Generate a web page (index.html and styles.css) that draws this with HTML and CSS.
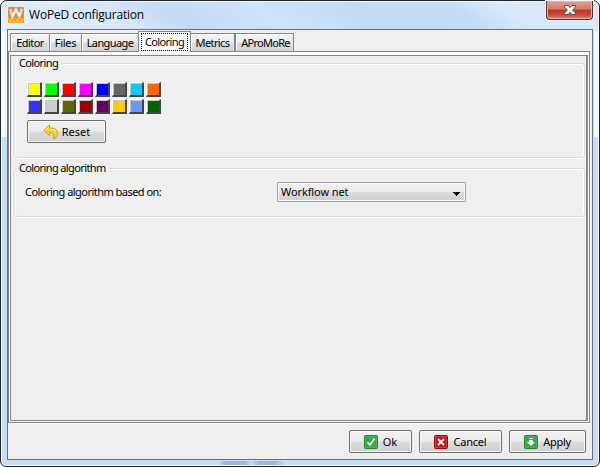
FILE: index.html
```html
<!DOCTYPE html>
<html lang="en">
<head>
<meta charset="utf-8">
<title>WoPeD configuration</title>
<link rel="stylesheet" href="styles.css">
</head>
<body>
<div class="window">
  <header class="titlebar">
    <svg class="logo" width="16" height="16" viewBox="0 0 16 16">
      <rect width="16" height="16" rx="1" fill="#f58242"/>
      <rect y="11" width="16" height="5" fill="#f7a61c"/>
      <path d="M2.200 2l2.300 7.300L8 2.500l3.500 6.800L13.800 2" fill="none" stroke="#fff" stroke-width="2.200"/>
      <path d="M2 14.500l1.500-2M5 14.500h1.500M8 14.500l1.500-2M11 14.500h1M13 14.500l1.500-2" stroke="#fff3c0" fill="none"/>
    </svg>
    <h1>WoPeD configuration</h1>
    <button class="close" aria-label="Close">
      <svg width="12" height="10" viewBox="0 0 12 10"><path d="M.5.5h3.700L6 2.700 7.800.500h3.700v1.500L8.600 5l2.900 3v1.500H7.800L6 7.300 4.200 9.500H.500V8l2.900-3L.500 2z" fill="#fff" stroke="#554e5d"/></svg>
    </button>
  </header>
  <main class="client">
    <nav class="tabs">
      <span class="tab editor"><b>Editor</b></span><span class="tab files"><b>Files</b></span><span class="tab language"><b>Language</b></span><span class="tab selected"><b>Coloring</b></span><span class="tab metrics"><b>Metrics</b></span><span class="tab apromore"><b>AProMoRe</b></span>
    </nav>
    <div class="pane">
      <div class="page">
        <fieldset class="group colors">
          <legend><b>Coloring</b></legend>
          <div class="swatches">
            <i class="yellow"></i><i class="green"></i><i class="red"></i><i class="magenta"></i><i class="blue"></i><i class="gray"></i><i class="cyan"></i><i class="orange"></i>
            <i class="indigo"></i><i class="silver"></i><i class="olive"></i><i class="maroon"></i><i class="purple"></i><i class="gold"></i><i class="sky"></i><i class="forest"></i>
          </div>
          <button class="btn reset">
            <svg width="16" height="16" viewBox="0 0 16 16"><path d="M6.500 1L.8 6.600l5.700 5V8.500c3.200-.2 4.700 1.200 4.200 6.500 3.600-2.400 5-5.200 3.500-8C12.800 4.500 10 3.900 6.500 4z" fill="#f2d32c" stroke="#c6a21b"/><path d="M6 3L2.300 6.500M7 5.400c3-.2 5.500.6 6.200 2.700" fill="none" stroke="#fff19a"/></svg>
            <b>Reset</b>
          </button>
        </fieldset>
        <fieldset class="group algorithm">
          <legend><b>Coloring algorithm</b></legend>
          <div class="row">
            <label><b>Coloring algorithm based on:</b></label>
            <div class="combo"><b>Workflow net</b><svg width="7" height="4" viewBox="0 0 7 4" shape-rendering="crispEdges"><path d="M0 0h7v1H6v1H5v1H4v1H3V3H2V2H1V1H0z"/></svg></div>
          </div>
        </fieldset>
      </div>
    </div>
    <footer class="actions">
      <button class="btn ok">
        <svg width="14" height="14" viewBox="0 0 14 14"><rect x=".5" y=".5" width="13" height="13" rx="1" fill="#35a84a" stroke="#188832"/><rect x="1.500" y="1.500" width="11" height="11" fill="none" stroke="#58b969" stroke-width=".6"/><path d="M3.500 7.200L6 10l4.500-6.500" fill="none" stroke="#fff" stroke-width="1.600"/></svg>
        <b>Ok</b>
      </button>
      <button class="btn cancel">
        <svg width="14" height="14" viewBox="0 0 14 14"><rect x=".5" y=".5" width="13" height="13" rx="1" fill="#cf0c14" stroke="#a50008"/><rect x="1.500" y="1.500" width="11" height="11" fill="none" stroke="#e25b60" stroke-width=".6"/><path d="M4 4l6 6M10 4l-6 6" stroke="#fff" stroke-width="2"/></svg>
        <b>Cancel</b>
      </button>
      <button class="btn apply">
        <svg width="14" height="14" viewBox="0 0 14 14"><rect x=".5" y=".5" width="13" height="13" rx="1" fill="#35a84a" stroke="#188832"/><rect x="1.500" y="1.500" width="11" height="11" fill="none" stroke="#58b969" stroke-width=".6"/><path d="M5 3h4v1H5zM5 5h4v2h2.200L7 11 2.800 7H5z" fill="#fff"/></svg>
        <b>Apply</b>
      </button>
    </footer>
  </main>
</div>
</body>
</html>
```
FILE: styles.css
```css
* { box-sizing: border-box; }
body { margin: 0; background: #fff; color: #000; font: 11px/14px "Noto Sans", sans-serif; overflow: hidden; }
b { font-weight: 400; white-space: nowrap; }
button { font: inherit; color: inherit; margin: 0; padding: 0; }
svg { display: block; flex: none; }

.window {
  width: 600px; height: 467px; padding: 0 5px 5px 6px;
  border: 1px solid #20252d; border-radius: 7px 7px 6px 6px;
  box-shadow: inset 0 0 0 1px #f2f9ff;
  background:
    linear-gradient(90deg, transparent 18px, #9eb8dc 24px, #9eb8dc 44px, transparent 50px, #9eb8dc 58px, #9eb8dc 74px, transparent 84px) 200px 460px / 100px 6px no-repeat,
    linear-gradient(#f0f7fe, #f0f7fe) 0 30px / 6px 106px no-repeat,
    linear-gradient(#f0f7fe, #f0f7fe) 593px 30px / 6px 106px no-repeat,
    linear-gradient(35deg, #e3effc 0, #d9e9fb 20%, #c4dbf4 30%, #cfe4fb 45%, #c2dcf5 60%, #c5def6 76%, #d9eafd 84%, #d5e8fc 100%) 0 0 / 600px 30px no-repeat,
    #c8def6;
}
.titlebar { height: 28px; display: flex; align-items: flex-start; padding-left: 1px; }
.logo { margin-top: 6px; }
h1 { margin: 6px 0 0 5px; font: 400 12px/16px "Open Sans", sans-serif; letter-spacing: -.2px; white-space: nowrap; }
.close {
  width: 47px; height: 19px; margin-left: auto; margin-right: 1px;
  display: flex; justify-content: center; align-items: center;
  border: 1px solid #612a2b; border-top: 0; border-radius: 0 0 4px 4px;
  box-shadow: inset 0 0 0 1px #e9b3a9, 0 0 0 1px #f1f5fc;
  background: linear-gradient(#e2a196 0, #d3796b 45%, #b93522 50%, #cd4a38 78%, #e48672 100%);
}
.client {
  width: 586px; height: 431px; display: flex; flex-direction: column;
  border: 1px solid #68727f; background: #efefef;
}
.tabs { height: 21px; flex: none; display: flex; align-items: flex-end; padding: 0 0 0 2px; letter-spacing: -.6px; }
.tab {
  height: 18px; display: flex; justify-content: center; align-items: center; padding-top: 1px;
  border: 1px solid #85858c; border-bottom: 0; margin-right: -1px;
  background: linear-gradient(#f3f3f3 0, #eee 48%, #dcdcdc 52%, #d4d4d4); box-shadow: inset 1px 1px #fff, inset -1px 0 #e5e5e5;
}
.editor { width: 40px; } .files { width: 33px; letter-spacing: -.3px; } .language { width: 58px; }
.selected { width: 53px; height: 21px; padding: 1px 2px 2px; background: #fff; position: relative; z-index: 1; margin-bottom: -1px; box-shadow: none; }
.selected b { flex: 1; height: 18px; line-height: 15px; text-align: center; border: 1px dotted #000; }
.metrics { width: 45px; margin-right: 0; } .apromore { width: 59px; padding-left: 2px; letter-spacing: -.7px; }
.pane { height: 372px; flex: none; width: 582px; padding: 3px 1px 1px; border: 1px solid #85858c; background: #fff; box-shadow: 0 1px #fff; }
.page { height: 366px; padding: 0 1px 0 3px; border: 1px solid #85858c; border-right-width: 2px; background: #efefef; }
.group {
  min-width: 0; margin: 0; padding: 0; border: 1px solid #d5dce3; border-radius: 3px;
  box-shadow: inset 1px 1px #fff, inset -1px 0 #fff, 0 1px #fff;
}
legend { padding: 0 3px; height: 14px; background: #efefef; letter-spacing: -.62px; }
.colors { height: 109px; padding-left: 12px; }
.colors legend { margin-left: -11px; }
.algorithm { height: 56px; margin-top: 3px; padding-left: 10px; }
.algorithm legend { margin-left: -9px; }
.colors { height: 102px; }
.swatches { display: grid; grid-template-columns: repeat(8, 15px); gap: 2px; padding-top: 12px; }
.swatches i { width: 15px; height: 15px; border: solid; border-width: 1px 2px 2px 1px; border-color: #fff #444 #444 #fff; box-shadow: inset 1px 1px #c4c4c4; }
.yellow { background: #ff0; } .green { background: #0f0; } .red { background: #f00; } .magenta { background: #f0f; }
.blue { background: #00f; } .gray { background: #666; } .cyan { background: #0cf; } .orange { background: #f60; }
.indigo { background: #33f; } .silver { background: #ccc; } .olive { background: #660; } .maroon { background: #900; }
.purple { background: #606; } .gold { background: #fc0; } .sky { background: #69f; } .forest { background: #060; }
.btn {
  height: 23px; display: flex; align-items: center; justify-content: center;
  border: 1px solid #707070; border-radius: 2px; box-shadow: inset 0 0 0 1px #f8f8f8;
  background: linear-gradient(#f2f2f2 0, #ebebeb 48%, #dcdcdc 52%, #cfcfcf);
}
.reset { width: 79px; margin-top: 6px; gap: 3px; }
.row { display: flex; align-items: center; height: 20px; margin-top: 7px; }
.row label { width: 252px; letter-spacing: -.53px; }
.combo {
  width: 189px; height: 20px; padding: 0 5px 0 3px; display: flex; align-items: center; justify-content: space-between;
  border: 1px solid #a2a2a7; border-radius: 1px; box-shadow: inset 0 0 0 1px #f8f8f8;
  background: linear-gradient(#f2f2f2 0, #ebebeb 48%, #dcdcdc 52%, #cfcfcf);
}
.combo b { letter-spacing: -.1px; }
.combo svg { margin-top: 3px; }
.actions { display: flex; justify-content: flex-end; gap: 7px; padding: 7px 6px 0 0; }
.ok { width: 63px; gap: 5px; } .cancel { width: 83px; gap: 5px; letter-spacing: -.2px; } .apply { width: 77px; gap: 5px; letter-spacing: -.3px; }
```
